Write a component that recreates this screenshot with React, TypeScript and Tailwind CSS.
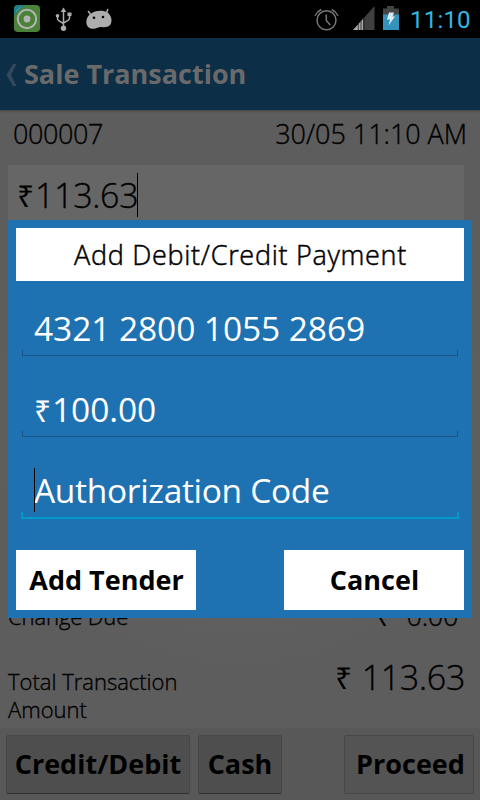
import React from "react";

type FieldProps = {
	value: string;
	rupee?: boolean;
	focused?: boolean;
};

const Rupee = ({ className = "" }: { className?: string }) => (
	<span className={`inline-block [-webkit-text-stroke:0] ${className}`}>₹</span>
);

const StatusBar = () => (
	<div className="flex h-[38px] shrink-0 items-start bg-black">
		<svg className="ml-[14px] mt-[5px]" width="26" height="27" viewBox="0 0 26 27">
			<rect width="26" height="27" rx="4" fill="#4a8239" />
			<path d="M0 10V4Q0 0 4 0H11Z" fill="#1d7e8a" />
			<path d="M2 6.500L6.500 2" stroke="#4fa5a5" strokeWidth="1.5" strokeDasharray="1.2 .7" />
			<circle cx="13" cy="14" r="9.2" fill="none" stroke="#b4b4b4" strokeWidth="2" />
			<circle cx="13" cy="14" r="3.4" fill="#b4b4b4" />
		</svg>
		<svg className="ml-[15px] mt-[7px]" width="18" height="25" viewBox="0 0 18 25">
			<g fill="none" stroke="#adadad" strokeWidth="1.5">
				<path d="M8.5 22V3M2.5 9v2.500q0 1.500 1.500 2.300l4.500 2.700M14.500 8v3q0 1.500-1.500 2.300l-4.500 2.700" />
			</g>
			<g fill="#adadad">
				<path d="M8.500 .5L11.300 5H5.700Z" />
				<circle cx="8.500" cy="21.300" r="2.700" />
				<circle cx="2.500" cy="8.700" r="1.800" />
				<path d="M12.500 5.500h4v3.500h-4Z" />
			</g>
		</svg>
		<svg className="ml-[13px] mt-[8px]" width="27" height="22" viewBox="0 0 27 22">
			<path
				d="M4.500 6C8 2.500 17 1.500 21.500 4.500C25.500 7.500 26.500 13 24.500 16.500C22.500 19.500 18 19.500 15.500 19C13 18.500 11 20.600 7.500 20.800C4 21 1 19 .5 15.500C0 12 1 8.500 4.500 6Z"
				fill="#adadad"
			/>
			<path d="M5 7L2.500 3.500M20.500 5L21.700 1.500" stroke="#adadad" strokeWidth="1.600" strokeLinecap="round" />
			<circle cx="8" cy="9.800" r="1.300" fill="#000" />
			<circle cx="17" cy="9" r="1.300" fill="#000" />
		</svg>
		<svg className="ml-[201px] mt-[7px]" width="25" height="25" viewBox="0 0 25 25">
			<g fill="none" stroke="#777" strokeWidth="1.500">
				<circle cx="12.500" cy="13.300" r="9.500" />
				<path d="M12.300 7.500v6l4 4.500M1 8.800Q3 4.500 7.300 2.500M24 8.800Q22 4.500 17.700 2.500" />
			</g>
		</svg>
		<svg className="ml-[14px] mt-[6px]" width="22" height="24" viewBox="0 0 22 24">
			<path d="M0 24L21.500 0V24Z" fill="#3f3f3f" />
			<path d="M0 24L10 13V24Z" fill="#a8a8a8" />
			<path d="M5.300 17V24M8 14V24M11 11V24" stroke="#222" strokeWidth=".8" />
		</svg>
		<svg className="ml-[8px] mt-[6px]" width="16" height="24" viewBox="0 0 16 24">
			<path d="M0 2.500H4V0H11V2.500H16V9H0Z" fill="#444" />
			<path d="M0 8.500H16V24H0Z" fill="#3393bd" />
			<path d="M6 6.500H11L9.500 10.500H12L5.500 19.500L7 13.500H4Z" fill="#dceaf0" />
		</svg>
		<div className="ml-[11px] mt-[4px] font-['Roboto'] text-[24px] leading-[32px] tracking-[0.2px] text-[#33b5e5]">
			11:10
		</div>
	</div>
);

const DialogField = ({ value, rupee, focused }: FieldProps) => (
	<div className="relative mx-[14px] h-[81px] pl-[12px] text-[33.5px] leading-[46px] whitespace-nowrap text-white">
		<div className={focused ? "pt-[24px] tracking-[-0.32px]" : "pt-[24px] tracking-[-0.08px]"}>
			{rupee && <Rupee className="w-[18px] text-[30px]" />}
			{value}
		</div>
		{focused ? (
			<>
				<div className="absolute left-[12px] top-[25px] h-[44px] w-px bg-black" />
				<div className="absolute -left-px -right-px top-[69px] h-[7px] border-2 border-t-0 border-[#0099cc]" />
			</>
		) : (
			<div className="absolute left-0 right-0 top-[69px] h-[6px] border border-t-0 border-[#195486]" />
		)}
	</div>
);

const PaymentDialog = () => (
	<div className="absolute left-[8px] top-[220px] h-[398px] w-[464px] bg-[#1f72b2] text-black">
		<div className="mx-2 mt-2 h-[53px] bg-white pl-px text-center text-[27px] leading-[54px] font-light tracking-[0.7px] [-webkit-text-stroke:0.5px_black]">
			Add Debit/Credit Payment
		</div>
		<DialogField value="4321 2800 1055 2869" />
		<DialogField value="100.00" rupee />
		<DialogField value="Authorization Code" focused />
		<div className="mx-2 mt-[26px] flex justify-between text-[27px] leading-[60px] font-bold">
			<button className="h-[60px] w-[180px] bg-white pl-px">Add Tender</button>
			<button className="h-[60px] w-[180px] bg-white pl-px">Cancel</button>
		</div>
	</div>
);

const App = () => {
	return (
		<div className="relative flex h-[800px] w-[480px] flex-col overflow-hidden bg-[#5d5d5d] font-['Open_Sans',sans-serif] text-black">
			<StatusBar />
			<header className="flex h-[72px] shrink-0 items-center bg-[#0d2e47]">
				<svg className="ml-[6px] mt-px" width="11" height="22" viewBox="0 0 11 22">
					<path d="M7 0H10.500L5 11L10.500 22H7L.5 11Z" fill="#34495b" />
				</svg>
				<h1 className="ml-[7px] text-[27px] font-bold text-[#6a6a6a]">Sale Transaction</h1>
			</header>
			<main className="flex h-[618px] shrink-0 flex-col bg-[radial-gradient(circle_at_center,#666666,#5d5d5d_260px)] font-light [-webkit-text-stroke:0.35px_black]">
				<div className="h-[3px] shrink-0 bg-linear-to-b from-[#484848] to-[#5d5d5d]" />
				<div className="flex h-[52px] shrink-0 justify-between bg-[#5d5d5d] px-[13px] text-[27px] leading-[42px]">
					<span className="tracking-[-0.4px]">000007</span>
					<span className="tracking-[-0.05px]">30/05 11:10 AM</span>
				</div>
				<div className="ml-[8px] mr-[16px] flex h-[60px] shrink-0 items-center bg-[#666] pl-[9px] text-[34px] tracking-[-0.3px]">
					<Rupee className="w-[18px] text-[30px]" />
					<span className="-mr-px">113.63</span>
					<span className="h-[44px] w-px bg-black" />
				</div>
				<div className="mt-[377px] flex h-[28px] shrink-0 justify-between pl-[8px] pr-[22px] leading-[28px]">
					<span className="text-[22px] tracking-[-0.1px]">Change Due</span>
					<span className="flex text-[27px] tracking-[-0.3px]">
						<Rupee className="w-[30px] text-[25px]" />
						0.00
					</span>
				</div>
				<div className="mt-[24px] flex shrink-0 justify-between pl-[8px] pr-[15px]">
					<span className="mt-[13px] w-[200px] text-[22px] leading-[28px]">
						Total Transaction Amount
					</span>
					<span className="flex text-[34px] leading-[47px] tracking-[-0.3px]">
						<Rupee className="w-[27px] text-[30px]" />
						113.63
					</span>
				</div>
			</main>
			<footer className="flex h-[72px] shrink-0 bg-[#585858] pt-[7px] pl-[6px] text-[27px] leading-[56px] font-bold">
				<button className="h-[59px] w-[184px] rounded-[2px] border border-[#474747] border-b-[#303030] bg-[#4e4e4e] pb-px">Credit/Debit</button>
				<button className="ml-[8px] h-[59px] w-[84px] rounded-[2px] border border-[#474747] border-b-[#303030] bg-[#4e4e4e] pb-px">Cash</button>
				<button className="ml-[62px] h-[59px] w-[130px] rounded-[2px] border border-[#474747] bg-[#545454] pb-px pl-[3px]">Proceed</button>
			</footer>
			<PaymentDialog />
		</div>
	);
};

export default App;
